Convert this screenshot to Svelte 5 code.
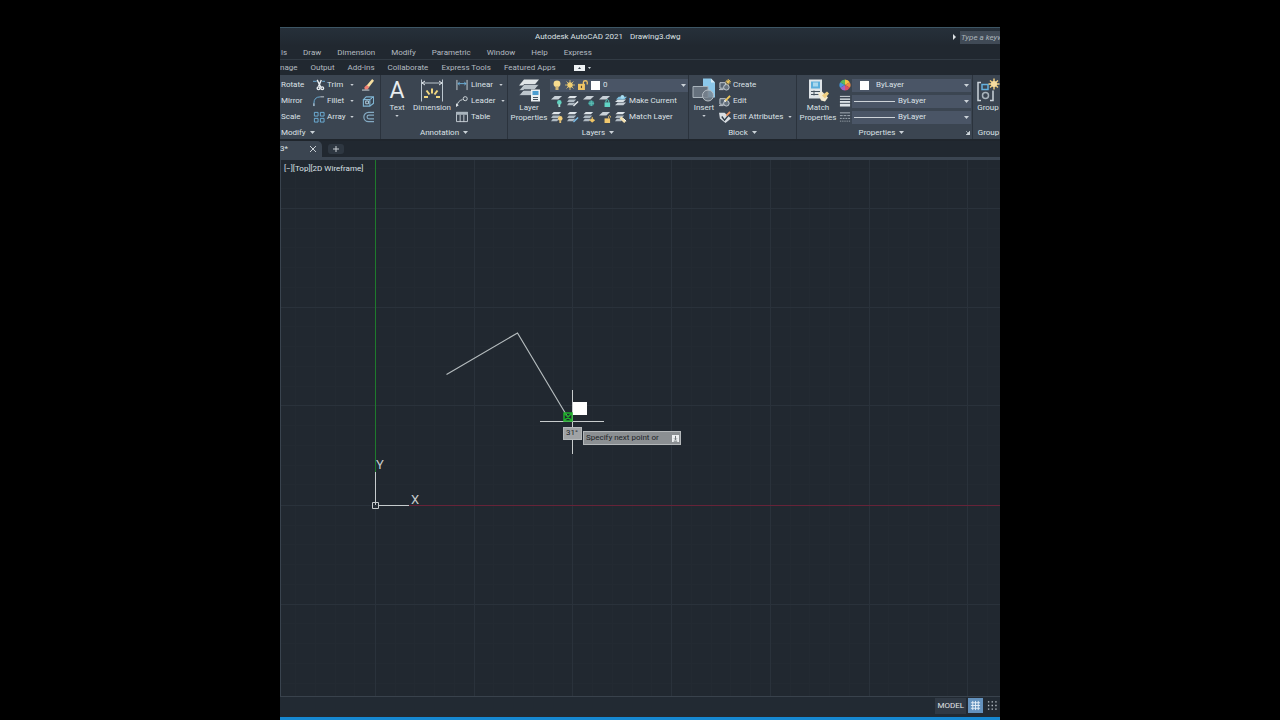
<script>
    const menus = ['ls', 'Draw', 'Dimension', 'Modify', 'Parametric', 'Window', 'Help', 'Express'];
    const tabs = ['nage', 'Output', 'Add-ins', 'Collaborate', 'Express Tools', 'Featured Apps'];

    const modifyTools = [
        { label: 'Rotate', tool: 'Trim', icon: 'trim', side: 'erase' },
        { label: 'Mirror', tool: 'Fillet', icon: 'fillet', side: 'explode' },
        { label: 'Scale', tool: 'Array', icon: 'array', side: 'offset' }
    ];

    const annotationTools = [
        { label: 'Linear', icon: 'linear', menu: true },
        { label: 'Leader', icon: 'leader', menu: true },
        { label: 'Table', icon: 'table', menu: false }
    ];

    const layerTools = [
        { label: 'Make Current', icon: 'current', icons: ['off', 'isolate', 'freeze', 'lock'] },
        { label: 'Match Layer', icon: 'match', icons: ['on', 'unisolate', 'thaw', 'unlock'] }
    ];

    const blockTools = [
        { label: 'Create', icon: 'create', menu: false },
        { label: 'Edit', icon: 'edit', menu: false },
        { label: 'Edit Attributes', icon: 'attributes', menu: true }
    ];

    const properties = [
        { name: 'Object color', icon: 'wheel', line: false },
        { name: 'Lineweight', icon: 'weight', line: true },
        { name: 'Linetype', icon: 'linetype', line: true }
    ];

    // Grid spacing in drawing pixels, origin is the UCS icon
    const origin = { x: 95, y: 345 };
    const major = 98.7;
    const steps = Array.from({ length: 60 }, (_, i) => i - 20);
    const minorSteps = steps.filter((n) => n % 5 !== 0);
    const majorSteps = steps.filter((n) => n % 5 === 0);

    let gridOn = $state(true);
    let keyword = $state('');

    function gridLine(n) {
        const at = Math.round(n * major / 5);
        return `M${at}.5 -400v900M-100 ${at}.5h1400`;
    }
</script>

{#snippet caret()}
    <svg class="caret" viewBox="0 0 5 3" aria-hidden="true"><path d="M0 0h5L2.5 3z" /></svg>
{/snippet}

{#snippet sheets()}
    <path d="M3 1h8L8.500 3.500H.5z" fill="#dfe5ea" />
    <path d="M2 5h8L7.500 7.500H0z M2 8.500h7L6.500 11H0z" fill="#aeb9c2" />
{/snippet}

{#snippet icon(name)}
    <svg class="icon" viewBox="0 0 13 13" fill="none" aria-hidden="true">
        {#if name === 'trim'}
            <path d="M0 2.500h4M10 2.500h3" stroke="#6fb2dc" />
            <path d="M4.500 1l4 8M9 1L6 8" stroke="#e8edf0" stroke-width="1.500" />
            <circle cx="6" cy="10" r="1.500" stroke="#e8edf0" stroke-width="1.500" /><circle cx="10" cy="10" r="1.500" stroke="#e8edf0" stroke-width="1.500" />
        {:else if name === 'fillet'}
            <path d="M1 12V9Q1 2 8 2" stroke="#6fb2dc" /><path d="M8 2h4M1 12V9" stroke="#cdd5db" />
        {:else if name === 'array'}
            <path d="M1.500 1.500h4v4h-4zM8 1.500h4v4H8zM1.500 8h4v4h-4zM8 8h4v4H8z" stroke="#6fb2dc" />
        {:else if name === 'erase'}
            <path d="M5 7L11 0l2 2L7.500 9z" fill="#f6dfa0" /><path d="M2.500 9L5 6.500 8 9l-2 2.500H3z" fill="#ef7f73" />
            <path d="M0 12h8" stroke="#d8dde1" />
        {:else if name === 'explode'}
            <path d="M1.500 5h7v7h-7zM1.500 5l3-3h8l-4 3M12.500 2v7l-4 3" stroke="#7fb4d2" stroke-width="1.200" />
            <path d="M4 6.500h3v3H4z" stroke="#b7d7e8" />
        {:else if name === 'offset'}
            <path d="M13 1.500H7a5 5 0 0 0 0 10h6M13 4.500H7.500a2 2 0 0 0 0 4H13" stroke="#83a9c2" stroke-width="1.300" />
        {:else if name === 'linear'}
            <path d="M1 1v11M12 1v11" stroke="#c9d1d7" /><path d="M2 5h9M4 3.500L2 5l2 1.500M9 3.500L11 5 9 6.500" stroke="#6fb2dc" />
        {:else if name === 'leader'}
            <path d="M1 12Q2 6 7 5" stroke="#d9dfe3" /><circle cx="10" cy="4" r="2.200" stroke="#d9dfe3" /><path d="M0 9v4l3-2z" fill="#d9dfe3" />
        {:else if name === 'table'}
            <path d="M.5 1.500h12v10H.5zM1 3h12M4.500 4v8M8.500 4v8" stroke="#cbd3d9" /><path d="M0 1h13v3H0z" fill="#a9b4bd" />
        {:else if name === 'create' || name === 'edit'}
            <path d="M1 4h6v6H1z" stroke="#cbd3d9" fill="#566371" /><circle cx="8" cy="9" r="3" stroke="#cbd3d9" fill="#66727e" />
            <path d="M0 11.500h5" stroke="#cbd3d9" />
            {#if name === 'create'}
                <path d="M10 0v6M7 3h6M8 1l4 4M12 1L8 5" stroke="#f0c95c" />
            {:else}
                <path d="M7 6l5-5" stroke="#f0c95c" stroke-width="2" /><path d="M6 7l1-1" stroke="#fff" stroke-width="2" />
            {/if}
        {:else if name === 'attributes'}
            <path d="M0 2h6l7 6-6 5-6-5z" fill="#d8dde2" /><path d="M3 6l3 4 4-5" stroke="#2f3b47" stroke-width="1.500" /><path d="M8 5l4-4" stroke="#ee9561" stroke-width="2" />
        {:else if name === 'wheel'}
            <path d="M6.500 6.500V.5A6 6 0 0 1 11.700 3.500z" fill="#f5c242" /><path d="M6.500 6.500l5.200-3a6 6 0 0 1 0 6z" fill="#ee8a45" />
            <path d="M6.500 6.500l5.200 3a6 6 0 0 1-5.200 3z" fill="#dc4f64" /><path d="M6.500 6.500v6a6 6 0 0 1-5.200-3z" fill="#a063c5" />
            <path d="M6.500 6.500l-5.200 3a6 6 0 0 1 0-6z" fill="#4598dd" /><path d="M6.500 6.500l-5.200-3A6 6 0 0 1 6.500.5z" fill="#57b85f" />
        {:else if name === 'weight'}
            <path d="M1 1.500h11" stroke="#dce2e6" /><path d="M1 4.500h11" stroke="#dce2e6" stroke-width="1.500" />
            <path d="M1 7.500h11" stroke="#dce2e6" stroke-width="2" /><path d="M1 11h11" stroke="#dce2e6" stroke-width="3" />
        {:else if name === 'linetype'}
            <path d="M1 2h11" stroke="#aab4bc" /><path d="M1 5h11" stroke="#aab4bc" stroke-dasharray="3 1" />
            <path d="M1 8h11" stroke="#aab4bc" stroke-dasharray="2 1" /><path d="M1 11h11" stroke="#aab4bc" stroke-dasharray="1 1" />
        {:else if name === 'bulb'}
            <circle cx="6.500" cy="5" r="4.500" fill="#f8dc90" /><path d="M4.500 8h4v5h-4z" fill="#d5b878" />
        {:else if name === 'sun'}
            <circle cx="6.500" cy="6.500" r="3.500" fill="#f0cf72" />
            <path d="M6.500 0v13M0 6.500h13M2 2l9 9M11 2l-9 9" stroke="#f0cf72" />
        {:else if name === 'padlock'}
            <path d="M0 5h9v8H0z" fill="#f0c565" /><path d="M7 6V3q0-2 2.500-2T12 3v3" stroke="#f0c565" stroke-width="1.700" /><path d="M4.500 7.500v3" stroke="#50483a" stroke-width="1.500" />
        {:else if name === 'current'}
            <path d="M3 8h9l-3 3H0z" fill="#c3ccd3" /><path d="M3 5h9l-3 2.500H0z" fill="#d9e0e5" /><path d="M4 2h9l-3 3H1z" fill="#7fc3e3" /><circle cx="8" cy="2" r="2" fill="#a8dcf0" />
        {:else if name === 'match'}
            {@render sheets()}<path d="M6 7l5 5" stroke="#f2dfae" stroke-width="3" /><path d="M9 8l3 3" stroke="#fff" />
        {:else if name === 'off' || name === 'freeze' || name === 'lock' || name === 'unlock'}
            <path d="M4 1h8L8 5H0z" fill="#c9d1d8" />
            {#if name === 'off'}
                <circle cx="9" cy="8" r="2.500" fill="#62d1bf" /><path d="M8 10h2v3H8z" fill="#a9ded5" />
            {:else if name === 'freeze'}
                <circle cx="9" cy="9" r="3" fill="#3e9c98" /><path d="M9 6v6M6 9h6" stroke="#65bdb5" />
            {:else}
                <path d="M6 8h6v5H6z" fill={name === 'lock' ? '#60d4c5' : '#f1c86e'} />
                <path d={name === 'lock' ? 'M7.500 8V6q1.500-2 3 0v2' : 'M10.500 8V6q1-2 2 0v1'} stroke={name === 'lock' ? '#60d4c5' : '#f1c86e'} />
            {/if}
        {:else}
            {@render sheets()}
            {#if name === 'on'}
                <circle cx="10" cy="8" r="2.500" fill="#f3cf7c" /><path d="M9 10h2v3H9z" fill="#dcbc75" />
            {:else if name === 'thaw'}
                <circle cx="10" cy="10" r="2" fill="#f0c565" /><path d="M10 6.500v6M7 10h6" stroke="#f0c565" />
            {:else}
                <path d="M7 12l5-5" stroke={name === 'isolate' ? '#e8edf0' : '#78bce8'} stroke-width="1.500" />
            {/if}
        {/if}
    </svg>
{/snippet}

<main class="screen">
    <div class="app">
        <header class="title-bar">
            <h1><span>Autodesk AutoCAD 2021</span><span>Drawing3.dwg</span></h1>
            <svg class="search-arrow" viewBox="0 0 3 6" aria-hidden="true"><path d="M0 0l3 3-3 3z" /></svg>
            <input class="search" aria-label="Search" placeholder="Type a keyword or phrase" bind:value={keyword} />
        </header>

        <nav class="menu-bar">
            {#each menus as menu}
                <button>{menu}</button>
            {/each}
        </nav>

        <nav class="ribbon-tabs">
            {#each tabs as tab}
                <button>{tab}</button>
            {/each}
            <button class="ribbon-toggle" aria-label="Minimize ribbon">
                <svg viewBox="0 0 11 6"><rect width="11" height="6" fill="#eef2f4" /><path d="M4 4h3L5.500 2z" fill="#38444f" /></svg>
                {@render caret()}
            </button>
        </nav>

        <div class="ribbon">
            <section class="panel modify">
                <div class="rows">
                    {#each modifyTools as row}
                        <div class="row modify-row">
                            <button class="tool">{row.label}</button>
                            <button class="tool">{@render icon(row.icon)}<span>{row.tool}</span><span class="end">{@render caret()}</span></button>
                            <button class="tool" aria-label={row.side}>{@render icon(row.side)}</button>
                        </div>
                    {/each}
                </div>
                <button class="panel-title">Modify {@render caret()}</button>
            </section>

            <section class="panel annotation">
                <div class="panel-body">
                    <button class="big text-tool">
                        <span class="letter">A</span>
                        <span>Text</span>
                        {@render caret()}
                    </button>
                    <button class="big">
                        <svg class="big-icon" viewBox="0 0 24 24" fill="none">
                            <path d="M1.500 1v22M22.500 1v22M2 4.500h20" stroke="#bcc7cf" />
                            <path d="M5 2.500L2 4.500l3 2M19 2.500l3 2-3 2" stroke="#e2e8ec" />
                            <path d="M12 10v5M6.500 12l3 4M17.500 12l-3 4M4 18.500h4M16 18.500h4" stroke="#f1d780" stroke-width="2" />
                        </svg>
                        <span>Dimension</span>
                    </button>
                    <div class="rows">
                        {#each annotationTools as item}
                            <button class="tool row">{@render icon(item.icon)}<span>{item.label}</span>{#if item.menu}<span class="drop">{@render caret()}</span>{/if}</button>
                        {/each}
                    </div>
                </div>
                <button class="panel-title">Annotation {@render caret()}</button>
            </section>

            <section class="panel layers">
                <div class="panel-body">
                    <button class="big">
                        <svg class="big-icon" viewBox="0 0 24 24">
                            <path d="M7 1h15l-5 6H2z" fill="#e0e5e8" /><path d="M7 6h15l-5 6H2zM7 11h15l-5 6H2z" fill="#bcc5cc" stroke="#3b4551" stroke-width=".7" />
                            <path d="M14 11h9v12h-9z" fill="#e9eef1" /><path d="M15.500 12.500h6v4h-6z" fill="#4b9dd0" /><path d="M16 19h5M16 21h5" stroke="#45515d" />
                        </svg>
                        <span>Layer<br />Properties</span>
                    </button>
                    <div class="rows">
                        <div class="row">
                            <div class="combo layer-combo">
                                {@render icon('bulb')}{@render icon('sun')}{@render icon('padlock')}
                                <span class="swatch"></span>
                                <select aria-label="Layer"><option>0</option></select>
                                {@render caret()}
                            </div>
                        </div>
                        {#each layerTools as row}
                            <div class="row layer-row">
                                {#each row.icons as name}
                                    <button class="tool" aria-label="Layer {name}">{@render icon(name)}</button>
                                {/each}
                                <button class="tool">{@render icon(row.icon)}<span>{row.label}</span></button>
                            </div>
                        {/each}
                    </div>
                </div>
                <button class="panel-title">Layers {@render caret()}</button>
            </section>

            <section class="panel block">
                <div class="panel-body">
                    <button class="big">
                        <svg class="big-icon" viewBox="0 0 24 24">
                            <path d="M11 0h8l4 4v15H11z" fill="#8cc8ea" /><path d="M19 0v4h4z" fill="#d6edf8" />
                            <path d="M1 8h15v11H1z" fill="#66717d" stroke="#a9b3bb" /><circle cx="16" cy="17" r="5.500" fill="#77828d" fill-opacity=".8" stroke="#b5bec5" />
                        </svg>
                        <span>Insert</span>
                        {@render caret()}
                    </button>
                    <div class="rows">
                        {#each blockTools as item}
                            <button class="tool row">{@render icon(item.icon)}<span>{item.label}</span>{#if item.menu}<span class="drop">{@render caret()}</span>{/if}</button>
                        {/each}
                    </div>
                </div>
                <button class="panel-title">Block {@render caret()}</button>
            </section>

            <section class="panel properties">
                <div class="panel-body">
                    <button class="big">
                        <svg class="big-icon" viewBox="0 0 24 24">
                            <path d="M3 1h13v19H3z" fill="#dfe4e8" /><path d="M5 3h9v7H5z" fill="#5caedb" /><path d="M7 4h5v4H7z" fill="#a8d7ed" />
                            <path d="M5 13h9M5 16h9M8 12v5" stroke="#44505c" /><path d="M12 15l4-2 6 6-3 4-4-1z" fill="#f4ead0" /><path d="M16 17l5-4 2 2-4 5z" fill="#f0cf82" />
                        </svg>
                        <span>Match<br />Properties</span>
                    </button>
                    <div class="rows">
                        {#each properties as item}
                            <div class="row property-row">
                                {@render icon(item.icon)}
                                <div class="combo">
                                    <span class={item.line ? 'sample' : 'swatch'}></span>
                                    <select aria-label={item.name}><option>ByLayer</option></select>
                                    {@render caret()}
                                </div>
                            </div>
                        {/each}
                    </div>
                </div>
                <div class="title-row">
                    <button class="panel-title">Properties {@render caret()}</button>
                    <button class="launcher" aria-label="Properties settings"><svg viewBox="0 0 4 4"><path d="M4 0v4H0zM0 0l2 2" stroke="#cfd6dc" stroke-width=".6" fill="#cfd6dc" /></svg></button>
                </div>
            </section>

            <section class="panel groups">
                <div class="panel-body">
                    <button class="big">
                        <svg class="big-icon" viewBox="0 0 24 24" fill="none">
                            <path d="M5 4H2v18h3M14 22h3V12" stroke="#cbd3da" stroke-width="1.500" /><path d="M6 6h6v5H6z" stroke="#65b1de" stroke-width="1.500" />
                            <circle cx="9.500" cy="17" r="3" stroke="#a9b4bc" stroke-width="1.500" />
                            <path d="M18 0v11M12.500 5.500h11M14 2l8 7M22 2l-8 7" stroke="#f2cf7f" stroke-width="1.500" /><circle cx="18" cy="5.500" r="3" fill="#f6dca0" />
                        </svg>
                        <span>Group</span>
                    </button>
                </div>
                <button class="panel-title">Group</button>
            </section>
        </div>

        <div class="file-tabs">
            <div class="file-tab"><span>3*</span><button aria-label="Close drawing"><svg viewBox="0 0 6 6"><path d="M0 0l6 6M6 0L0 6" /></svg></button></div>
            <button class="new-tab" aria-label="New drawing"><svg viewBox="0 0 6 6"><path d="M3 0v6M0 3h6" /></svg></button>
        </div>

        <div class="canvas">
            <svg class="drawing" fill="none" aria-label="Drawing area">
                {#if gridOn}
                    <g transform="translate({origin.x} {origin.y})">
                        {#each minorSteps as n}
                            <path class="minor" d={gridLine(n)} />
                        {/each}
                        {#each majorSteps as n}
                            <path class="major" d={gridLine(n)} />
                        {/each}
                    </g>
                {/if}
                <path d="M95.500 0v312" stroke="#1f7a2c" />
                <path d="M129 345.500h1200" stroke="#662338" />
                <path d="M95.500 312v33M99 345.500h30M92.500 342.500h6v6h-6z" stroke="#c6cbcd" />
                <path d="M166.500 214.500L237.500 173L287 256" stroke="#b4bbbd" stroke-width="1.200" />
                <path d="M292.500 230v64M260 261.500h64" stroke="#c8cccd" />
                <path d="M284 253h8v8h-8zM284 253l8 8M292 253l-8 8" stroke="#1fae2a" stroke-width="1.500" />
                <path d="M293 242h14v13h-14z" class="cursor-badge" />
                <text x="96" y="309">Y</text>
                <text x="131" y="344">X</text>
            </svg>
            <span class="view-label">[−][Top][2D Wireframe]</span>
            <span class="angle">31°</span>
            <div class="prompt"><span>Specify next point or</span><svg viewBox="0 0 8 8"><rect width="8" height="8" fill="#eef0f1" /><path d="M4 1v4M2.500 4L4 5.500 5.500 4M2 7h4" stroke="#5c6266" fill="none" /></svg></div>
        </div>

        <footer class="status-bar">
            <button class="model">MODEL</button>
            <button class="toggle" class:active={gridOn} aria-label="Display grid" onclick={() => gridOn = !gridOn}>
                <svg viewBox="0 0 12 12"><path d="M3 1v10M6 1v10M9 1v10M1 3h10M1 6h10M1 9h10" stroke="#e6eff7" /></svg>
            </button>
            <button class="toggle" aria-label="Snap mode">
                <svg viewBox="0 0 12 12"><path d="M1 2h10M1 6h10M1 10h10" stroke="#b9c1c8" stroke-width="1.500" stroke-dasharray="1.500 2.500" /></svg>
            </button>
        </footer>
        <div class="taskbar"></div>
    </div>
</main>

<style>
    :global(body) {
        background: #000;
    }

    .screen {
        height: 100vh;
        width: min(100vw, 100vh);
        margin: 0 auto;
        padding-top: 27px;
        box-sizing: border-box;
        overflow: hidden;
        font: 8px/10px Roboto, sans-serif;
        color: #dbe1e6;
    }

    .app {
        display: flex;
        flex-direction: column;
        height: 100%;
        background: #212830;
    }

    button,
    input,
    select {
        margin: 0;
        padding: 0;
        border: none;
        background: none;
        color: inherit;
        font: inherit;
        white-space: nowrap;
    }

    svg {
        display: block;
        flex: none;
    }

    .caret {
        width: 5px;
        height: 3px;
        fill: #cbd2d8;
    }

    .icon {
        width: 12px;
        height: 12px;
    }

    .title-bar {
        display: flex;
        align-items: center;
        height: 18px;
        border-top: 1px solid #3d5665;
        background: linear-gradient(#26303a, #212830);
    }

    h1 {
        display: flex;
        gap: 7px;
        flex: 1;
        margin: 0;
        padding-left: 255px;
        font: inherit;
        color: #dce1e4;
    }

    .search-arrow {
        width: 3px;
        height: 6px;
        margin-right: 4px;
        fill: #dce1e4;
    }

    .search {
        width: 39px;
        height: 13px;
        padding-left: 1px;
        background: #404a56;
        font-style: italic;
    }

    .search::placeholder {
        color: #aab2b9;
        opacity: 1;
    }

    .menu-bar,
    .ribbon-tabs {
        display: flex;
        align-items: center;
        box-sizing: border-box;
        height: 14px;
        color: #b4bbc1;
    }

    .menu-bar {
        gap: 16px;
        padding: 1px 0 0 1px;
        border-bottom: 1px solid #323b44;
    }

    .ribbon-tabs {
        gap: 13px;
        height: 15px;
    }

    .ribbon-toggle {
        display: flex;
        align-items: center;
        gap: 3px;
        margin-left: 5px;
    }

    .ribbon-toggle svg:first-child {
        width: 11px;
        height: 6px;
    }

    .ribbon-toggle .caret {
        width: 3px;
        height: 2px;
    }

    .ribbon {
        display: grid;
        grid-template-columns: 101fr 127fr 181fr 108fr 176fr 27fr;
        height: 64px;
        border-bottom: 2px solid #1f252c;
        background: #3b4551;
    }

    .panel {
        display: flex;
        flex-direction: column;
        min-width: 0;
        padding-top: 2px;
        box-sizing: border-box;
        overflow: hidden;
        border-right: 1px solid #2b333d;
    }

    .panel-body {
        display: flex;
    }

    .rows {
        display: grid;
        grid-auto-rows: 16px;
    }

    .row,
    .tool {
        display: flex;
        align-items: center;
    }

    .tool {
        gap: 2px;
    }

    .panel-title {
        display: flex;
        align-items: center;
        justify-content: center;
        gap: 4px;
        height: 13px;
        margin-top: auto;
    }

    .modify {
        padding-left: 1px;
    }

    .modify-row {
        display: grid;
        grid-template-columns: 29px 46px 13px;
        column-gap: 3px;
    }

    .end {
        margin: 0 5px 0 auto;
    }

    .drop {
        margin-left: 3px;
    }

    .end .caret,
    .drop .caret,
    .big .caret {
        width: 4px;
        height: 2px;
    }

    .modify .panel-title {
        justify-content: flex-start;
    }

    .big {
        display: flex;
        flex-direction: column;
        align-items: center;
        width: 42px;
        padding-top: 1px;
        flex: none;
    }

    .big .caret {
        margin-top: 2px;
    }

    .big-icon,
    .letter {
        height: 25px;
    }

    .big-icon {
        width: 24px;
    }

    .letter {
        font-size: 23px;
        line-height: 25px;
        color: #e8ecee;
    }

    .annotation .big {
        width: 38px;
    }

    .annotation .text-tool {
        width: 32px;
    }

    .annotation .rows {
        padding-left: 5px;
    }

    .annotation .tool {
        gap: 3px;
    }

    .layers .rows {
        flex: 1;
    }

    .combo {
        display: flex;
        align-items: center;
        gap: 3px;
        flex: 1;
        height: 13px;
        padding: 0 2px;
        background: #4a5566;
    }

    .layer-combo .icon {
        width: 10px;
        height: 10px;
    }

    .combo select {
        flex: 1;
        min-width: 0;
        appearance: none;
        outline: none;
    }

    .combo option {
        background: #4a5566;
    }

    .swatch {
        width: 9px;
        height: 9px;
        background: #fff;
    }

    .sample {
        width: 41px;
        height: 1px;
        background: #cdd3d8;
    }

    .layer-row {
        gap: 4px;
        padding-left: 1px;
    }

    .block .big {
        width: 30px;
    }

    .properties .rows {
        flex: 1;
        padding-right: 1px;
    }

    .property-row {
        gap: 1px;
    }

    .property-row .swatch {
        margin: 0 4px 0 6px;
    }

    .title-row {
        display: flex;
        margin-top: auto;
        padding-right: 2px;
    }

    .title-row .panel-title {
        flex: 1;
    }

    .launcher svg {
        width: 4px;
        height: 4px;
    }

    .groups {
        border: none;
    }

    .groups .big {
        width: 30px;
    }

    .groups .panel-title {
        padding-left: 4px;
    }

    .file-tabs {
        display: flex;
        align-items: center;
        gap: 6px;
        height: 16px;
        border-bottom: 3px solid #3b4551;
    }

    .file-tabs svg {
        width: 6px;
        height: 6px;
        stroke: #c8ced3;
    }

    .file-tab {
        display: flex;
        align-items: center;
        justify-content: space-between;
        width: 36px;
        height: 16px;
        padding-right: 6px;
        background: #3b4551;
        border-top-right-radius: 5px;
    }

    .new-tab {
        display: grid;
        place-items: center;
        width: 16px;
        height: 10px;
        border-radius: 3px;
        background: #2e3741;
    }

    .canvas {
        position: relative;
        flex: 1;
        min-height: 0;
        overflow: hidden;
        border-left: 1px solid #39434e;
    }

    .drawing {
        position: absolute;
        inset: 0 0 0 -1px;
        width: calc(100% + 1px);
        height: 100%;
    }

    .major {
        stroke: #2a323b;
    }

    .minor {
        stroke: #232a32;
    }

    .drawing text {
        fill: #c6cbcd;
        font-size: 13px;
    }

    .cursor-badge {
        fill: #fff;
    }

    .view-label {
        position: absolute;
        left: 3px;
        top: 4px;
    }

    .angle,
    .prompt {
        position: absolute;
        box-sizing: border-box;
        border: 1px solid #b4b8ba;
        background: #8b8f92;
        color: #202428;
    }

    .angle {
        left: 282px;
        top: 267px;
        width: 19px;
        height: 13px;
        padding-left: 2px;
        background: #a0a3a5;
    }

    .prompt {
        display: flex;
        align-items: center;
        justify-content: space-between;
        left: 302px;
        top: 271px;
        width: 98px;
        height: 14px;
        padding: 0 1px 0 2px;
    }

    .prompt svg {
        width: 7px;
        height: 7px;
    }

    .status-bar {
        display: flex;
        align-items: center;
        justify-content: flex-end;
        gap: 2px;
        height: 17px;
        padding-bottom: 3px;
        border-top: 1px solid #39424c;
        background: #222a33;
    }

    .model {
        height: 16px;
        padding: 0 2px;
        background: #303944;
        color: #e0e4e7;
    }

    .toggle {
        display: grid;
        place-items: center;
        width: 15px;
        height: 15px;
    }

    .toggle svg {
        width: 11px;
        height: 11px;
    }

    .active {
        background: #6391bd;
    }

    .taskbar {
        height: 3px;
        background: #1688d2;
    }
</style>
